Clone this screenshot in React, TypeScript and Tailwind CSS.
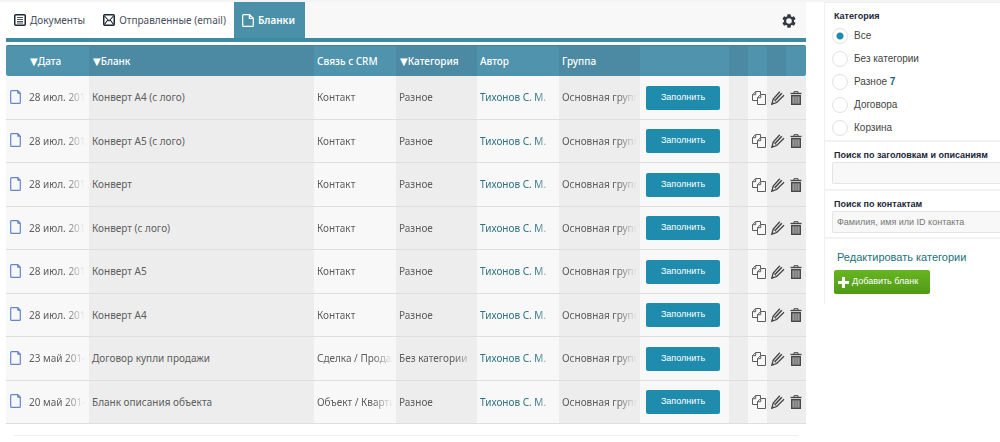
import type { ReactNode } from 'react';

interface Blank {
  id: number;
  date: string;
  title: string;
  relation: string;
  category: string;
}

const blanks: Blank[] = [
  { id: 1, date: '28 июл. 2014', title: 'Конверт А4 (с лого)', relation: 'Контакт', category: 'Разное' },
  { id: 2, date: '28 июл. 2014', title: 'Конверт А5 (с лого)', relation: 'Контакт', category: 'Разное' },
  { id: 3, date: '28 июл. 2014', title: 'Конверт', relation: 'Контакт', category: 'Разное' },
  { id: 4, date: '28 июл. 2014', title: 'Конверт (с лого)', relation: 'Контакт', category: 'Разное' },
  { id: 5, date: '28 июл. 2014', title: 'Конверт А5', relation: 'Контакт', category: 'Разное' },
  { id: 6, date: '28 июл. 2014', title: 'Конверт А4', relation: 'Контакт', category: 'Разное' },
  { id: 7, date: '23 май 2014', title: 'Договор купли продажи', relation: 'Сделка / Продажа', category: 'Без категории' },
  { id: 8, date: '20 май 2014', title: 'Бланк описания объекта', relation: 'Объект / Квартира', category: 'Разное' },
];

const categories: { name: string; count?: number }[] = [
  { name: 'Все' },
  { name: 'Без категории' },
  { name: 'Разное', count: 7 },
  { name: 'Договора' },
  { name: 'Корзина' },
];

function ListIcon() {
  return (
    <svg className="h-3 w-3" viewBox="0 0 12 12" fill="none" stroke="#1d2733" aria-hidden="true">
      <rect x="0.75" y="0.75" width="10.5" height="10.5" rx="1" strokeWidth="1.5" />
      <path d="M3 3.5h6M3 5.5h6M3 7.5h6M3 9h6" strokeWidth="0.8" />
    </svg>
  );
}

function MailIcon() {
  return (
    <svg className="h-3 w-3" viewBox="0 0 12 12" fill="none" stroke="#1d2733" aria-hidden="true">
      <rect x="0.75" y="0.75" width="10.5" height="10.5" rx="1" strokeWidth="1.5" />
      <path d="M1.5 2l4.5 5 4.5-5M1.5 10.5L4.7 6M10.5 10.5L7.3 6" strokeWidth="1.1" />
    </svg>
  );
}

function PageIcon({ className }: { className: string }) {
  return (
    <svg className={className} viewBox="0 0 11 14" fill="none" stroke="currentColor" aria-hidden="true">
      <path d="M1.6 0.7h6.2l2.5 2.5v9.2q0 .9-.9.9H1.6q-.9 0-.9-.9V1.6q0-.9.9-.9z" strokeWidth="1.2" />
      <path d="M7.6 0.7v2.7h2.7z" fill="currentColor" strokeWidth="0.6" />
    </svg>
  );
}

function ActivePageIcon() {
  return (
    <svg className="h-[13px] w-3" viewBox="0 0 12 13" fill="none" stroke="currentColor" aria-hidden="true">
      <path d="M1.6 0.7h6l3.7 3.6v7.1q0 .9-.9.9H1.6q-.9 0-.9-.9V1.6q0-.9.9-.9zM7.4 0.9v3.6h3.7" strokeWidth="1.2" />
    </svg>
  );
}

function GearIcon() {
  return (
    <svg className="h-[14px] w-[14px]" viewBox="0 0 14 14" aria-hidden="true">
      <g fill="#343a43">
        <rect x="5.2" y="0.3" width="3.6" height="13.4" rx="0.8" />
        <rect x="5.2" y="0.3" width="3.6" height="13.4" rx="0.8" transform="rotate(60 7 7)" />
        <rect x="5.2" y="0.3" width="3.6" height="13.4" rx="0.8" transform="rotate(120 7 7)" />
        <circle cx="7" cy="7" r="5.1" />
      </g>
      <circle cx="7" cy="7" r="2.8" fill="#f8f8f8" />
    </svg>
  );
}

function CopyIcon() {
  return (
    <svg className="h-[14px] w-[14px]" viewBox="0 0 14 14" fill="none" stroke="#5c5c5c" aria-hidden="true">
      <path d="M5.5 9.5h-5V3.7L3.7.5h4.8v3M3.7.5v3.2H.5" />
      <path d="M8.7 3.5h4.8v10h-8V6.7zM8.7 3.5v3.2H5.5" />
    </svg>
  );
}

function PencilIcon() {
  return (
    <svg className="h-[14px] w-[14px]" viewBox="0 0 14 14" fill="none" stroke="#444" aria-hidden="true">
      <path d="M8.8.8L2.2 8 .8 13.2l4.9-1.7 7.3-7.2" strokeWidth="1.3" />
      <path d="M10.8 2.2L4 9.5" strokeWidth="1.5" />
      <path d="M2.2 8l1.8 1.5 1.7 2" strokeWidth="0.8" />
      <path d="M.6 13.5l.8-2.6 1.8 1.7z" fill="#444" stroke="none" />
    </svg>
  );
}

function TrashIcon() {
  return (
    <svg className="h-[14px] w-3" viewBox="0 0 12 14" fill="none" stroke="#484848" aria-hidden="true">
      <path d="M0.5 2.5h11" strokeWidth="1.4" />
      <path d="M4 2V.7h4V2" />
      <rect x="1.7" y="4.7" width="8.6" height="8.6" fill="#a3a3a3" strokeWidth="1.4" />
      <path d="M4.3 5v8M6 5v8M7.7 5v8" stroke="#6c6c6c" strokeWidth="0.8" />
    </svg>
  );
}

// Long values fade out at the right edge of the cell
function FadeText({ children }: { children: ReactNode }) {
  return (
    <div className="overflow-hidden whitespace-nowrap mask-[linear-gradient(to_right,black_calc(100%-20px),transparent)]">
      {children}
    </div>
  );
}

function SortMark() {
  return <span className="font-['DejaVu_Sans',sans-serif] leading-none font-normal">▼</span>;
}

function Tabs() {
  return (
    <nav className="flex h-10 items-stretch border-b-4 border-[#3d8aa3] bg-[#f8f8f8] text-[10px] text-[#46505c]">
      <button type="button" className="flex items-center gap-1 bg-white pr-2 pl-2">
        <ListIcon />
        Документы
      </button>
      <button type="button" className="flex items-center gap-1 bg-white pr-2 pl-[10px]">
        <MailIcon />
        Отправленные (email)
      </button>
      <button type="button" className="flex items-center gap-1 bg-[#4b90a9] pr-[10px] pl-2 font-semibold text-white">
        <ActivePageIcon />
        Бланки
      </button>
      <button type="button" aria-label="Настройки" className="mr-[10px] ml-auto pt-[2px]">
        <GearIcon />
      </button>
    </nav>
  );
}

function BlankRow({ blank }: { blank: Blank }) {
  return (
    <tr className="odd:h-11 even:h-[43px] *:border-b *:border-[#dedede]">
      <td className="bg-[#f8f8f8] pb-[2px] pl-1">
        <PageIcon className="h-[14px] w-[11px] text-[#6285cb]" />
      </td>
      <td className="bg-[#f8f8f8] pr-1 pl-[5px]">
        <FadeText>{blank.date}</FadeText>
      </td>
      <td className="bg-[#ededed] px-[3px]">{blank.title}</td>
      <td className="bg-[#f8f8f8] px-[3px]">
        <FadeText>{blank.relation}</FadeText>
      </td>
      <td className="bg-[#ededed] px-[3px]">
        <FadeText>{blank.category}</FadeText>
      </td>
      <td className="bg-[#f8f8f8] px-[3px]">
        <FadeText>
          <a href="#author" className="text-[#2f7482]">Тихонов С. М.</a>
        </FadeText>
      </td>
      <td className="bg-[#ededed] px-[3px]">
        <FadeText>Основная группа</FadeText>
      </td>
      <td className="bg-[#f8f8f8] pl-[6px]">
        <button
          type="button"
          className="block h-6 w-[74px] rounded-xs bg-[#1f8cad] font-['Liberation_Sans',Arial,sans-serif] text-[9px] text-white"
        >
          Заполнить
        </button>
      </td>
      <td className="bg-[#ededed]" />
      <td className="bg-[#f8f8f8] pl-1">
        <button type="button" aria-label="Копировать" className="block">
          <CopyIcon />
        </button>
      </td>
      <td className="bg-[#ededed] pl-1">
        <button type="button" aria-label="Изменить" className="block">
          <PencilIcon />
        </button>
      </td>
      <td className="bg-[#ededed] pl-1">
        <button type="button" aria-label="Удалить" className="block">
          <TrashIcon />
        </button>
      </td>
    </tr>
  );
}

function BlankTable() {
  return (
    <table className="mt-[3px] w-full table-fixed border-separate border-spacing-0 text-left text-[10px] text-[#5e5e5e]">
      <colgroup>
        <col className="w-[18px]" />
        <col className="w-[65px]" />
        <col />
        <col className="w-[82px]" />
        <col className="w-[81px]" />
        <col className="w-[82px]" />
        <col className="w-[81px]" />
        <col className="w-[89px]" />
        <col className="w-[19px]" />
        <col className="w-[19px]" />
        <col className="w-[19px]" />
        <col className="w-5" />
      </colgroup>
      <thead>
        <tr className="h-[31px] text-white *:border-t *:border-[#3d819a] *:font-medium *:whitespace-nowrap">
          <th className="rounded-l-xs bg-[#5093ac]" />
          <th className="bg-[#5093ac] pl-[6px]"><SortMark />Дата</th>
          <th className="bg-[#4c8aa3] pl-1"><SortMark />Бланк</th>
          <th className="bg-[#5093ac] pl-[3px]">Связь с CRM</th>
          <th className="bg-[#4c8aa3] pl-1"><SortMark />Категория</th>
          <th className="bg-[#5093ac] pl-[3px]">Автор</th>
          <th className="bg-[#4c8aa3] pl-[3px]">Группа</th>
          <th className="bg-[#5093ac]" />
          <th className="bg-[#4c8aa3]" />
          <th className="bg-[#5093ac]" />
          <th className="bg-[#4c8aa3]" />
          <th className="rounded-r-xs bg-[#5093ac]" />
        </tr>
      </thead>
      <tbody>
        {blanks.map((blank) => (
          <BlankRow key={blank.id} blank={blank} />
        ))}
      </tbody>
    </table>
  );
}

function Sidebar() {
  return (
    <aside className="w-44 shrink-0 self-start border-t border-l border-[#f1efef] pb-[10px] font-['Liberation_Sans',Arial,sans-serif] text-[10px] text-[#444]">
      <fieldset className="h-[139px] border-b-2 border-[#f3f1f1] pl-[7px]">
        <legend className="pt-[7px] pb-px pl-[2px] text-[9px] leading-[13px] font-bold text-[#1b2638]">Категория</legend>
        {categories.map((category, i) => (
          <label key={category.name} className="flex h-[23px] items-center gap-[6px]">
            <input
              type="radio"
              name="category"
              defaultChecked={i === 0}
              className="h-4 w-4 appearance-none rounded-full border border-[#e2e2e2] bg-white checked:bg-[radial-gradient(circle,#1f8cad_3px,white_4px)]"
            />
            <span>
              {category.name}
              {category.count && <b className="text-[#1d6478]"> {category.count}</b>}
            </span>
          </label>
        ))}
      </fieldset>
      <div className="h-[49px] border-b-2 border-[#f3f1f1] pt-[7px] pl-[7px]">
        <label htmlFor="search-title" className="block pl-[2px] text-[9px] leading-[13px] font-bold whitespace-nowrap text-[#1b2638]">
          Поиск по заголовкам и описаниям
        </label>
        <input
          id="search-title"
          type="text"
          className="block h-[22px] w-full rounded-l-xs border border-r-0 border-[#e3e6e9] bg-[#f8f8f8] px-1 text-[9px]"
        />
      </div>
      <div className="h-12 border-b-2 border-[#f3f1f1] pt-[7px] pl-[7px]">
        <label htmlFor="search-contact" className="block pl-[2px] text-[9px] leading-[13px] font-bold whitespace-nowrap text-[#1b2638]">
          Поиск по контактам
        </label>
        <input
          id="search-contact"
          type="text"
          placeholder="Фамилия, имя или ID контакта"
          className="block h-[22px] w-full rounded-l-xs border border-r-0 border-[#e3e6e9] bg-[#f8f8f8] px-1 text-[9px] placeholder:text-[#777]"
        />
      </div>
      <div className="pt-[10px] pl-[9px]">
        <a href="#categories" className="block pl-[3px] text-[11px] leading-4 whitespace-nowrap text-[#22717a]">
          Редактировать категории
        </a>
        <button
          type="button"
          className="mt-[5px] flex h-6 w-24 items-center gap-[3px] rounded-xs bg-linear-to-b from-[#68b521] to-[#4f9a16] pl-1 text-[9px] whitespace-nowrap text-white"
        >
          <svg className="h-[11px] w-[11px]" viewBox="0 0 11 11" fill="white" aria-hidden="true">
            <path d="M4 0h3v4h4v3H7v4H4V7H0V4h4z" />
          </svg>
          Добавить бланк
        </button>
      </div>
    </aside>
  );
}

export default function App() {
  return (
    <div className="border-t-2 border-[#f4f4f4] bg-white font-['Noto_Sans','Open_Sans',sans-serif]">
      <div className="flex gap-[18px] pl-[6px]">
        <main className="min-w-0 flex-1">
          <Tabs />
          <BlankTable />
          <hr className="mx-2 mt-[11px] border-[#efefef]" />
        </main>
        <Sidebar />
      </div>
    </div>
  );
}
